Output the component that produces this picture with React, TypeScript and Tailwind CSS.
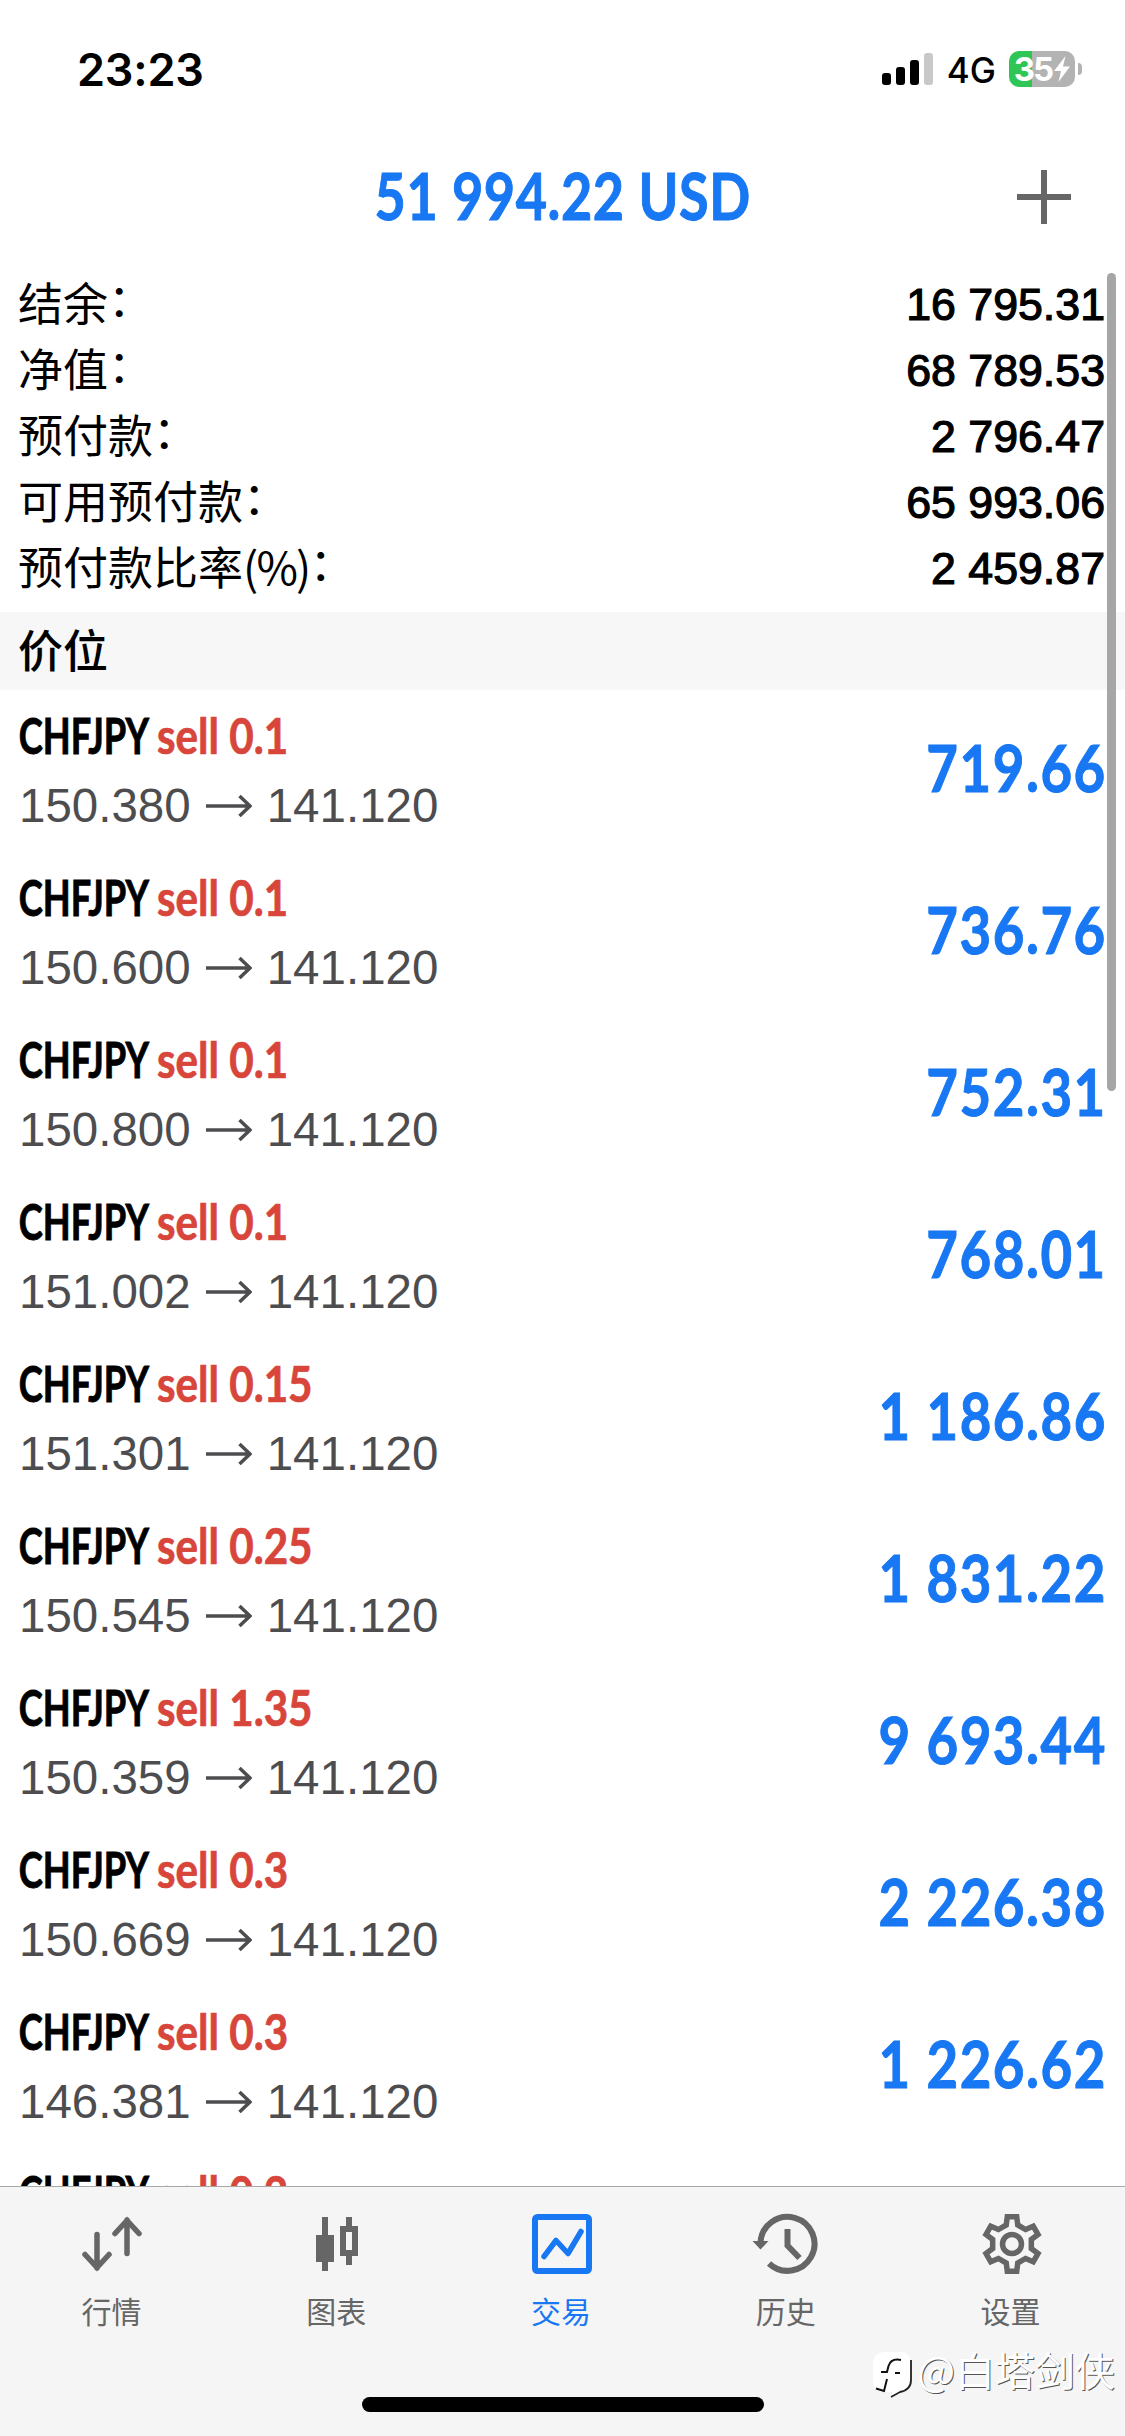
import { clsx } from 'clsx'

const ACCOUNT = [
  { label: '结余', value: '16 795.31' },
  { label: '净值', value: '68 789.53' },
  { label: '预付款', value: '2 796.47' },
  { label: '可用预付款', value: '65 993.06' },
  { label: '预付款比率', unit: '(%)', value: '2 459.87' },
]

const POSITIONS = [
  { volume: '0.1', open: '150.380', profit: '719.66' },
  { volume: '0.1', open: '150.600', profit: '736.76' },
  { volume: '0.1', open: '150.800', profit: '752.31' },
  { volume: '0.1', open: '151.002', profit: '768.01' },
  { volume: '0.15', open: '151.301', profit: '1 186.86' },
  { volume: '0.25', open: '150.545', profit: '1 831.22' },
  { volume: '1.35', open: '150.359', profit: '9 693.44' },
  { volume: '0.3', open: '150.669', profit: '2 226.38' },
  { volume: '0.3', open: '146.381', profit: '1 226.62' },
]

const TABS = [
  { label: '行情', Icon: QuotesIcon },
  { label: '图表', Icon: CandlesIcon },
  { label: '交易', Icon: TradeIcon, active: true },
  { label: '历史', Icon: HistoryIcon },
  { label: '设置', Icon: GearIcon },
]

/* All tab icons share a 64x64 box centred on 0,0 */
const iconProps = {
  viewBox: '-32 -32 64 64',
  className: 'size-16 overflow-visible',
  fill: 'none',
  stroke: 'currentColor',
  strokeWidth: 5.5,
}

function QuotesIcon() {
  return (
    <svg {...iconProps} strokeLinecap="round">
      <path d="M-15 -9.5V24M-27 10.5L-15 23.5L-3 10.5M15 9.5V-24M3 -10.5L15 -23.5L27 -10.5" />
    </svg>
  )
}

function CandlesIcon() {
  return (
    <svg {...iconProps} stroke="none" fill="currentColor">
      <path d="M-15 -27h6v18h6v27h-6v9h-6v-9h-6v-27h6z" />
      <path fillRule="evenodd" d="M9 -27h6v9h6v30h-6v9h-6v-9h-6v-30h6zM9 -12v18h6v-18z" />
    </svg>
  )
}

function TradeIcon() {
  return (
    <svg {...iconProps} strokeLinecap="round" strokeLinejoin="round">
      <rect x="-27" y="-27" width="54" height="54" rx="2.5" strokeWidth="6" />
      <path d="M-18 12.5L-6 -3.5L6 9.5L19 -12.5" />
    </svg>
  )
}

function HistoryIcon() {
  return (
    <svg {...iconProps} strokeWidth="6">
      <path d="M-26.5 -1A27 27 0 1 1 -18 19.5" />
      <path d="M0.5 -15V1.5L12.5 14" />
      <path d="M-34.5 -3h16l-8 8.5z" fill="currentColor" stroke="none" />
    </svg>
  )
}

// outline of one tooth, repeated every 60 degrees
const TOOTH = [[-5.75, -19], [-4.7, -27.3], [4.7, -27.3], [5.75, -19]]
const GEAR = Array.from({ length: 6 }, (_, i) => {
  const a = (i * Math.PI) / 3
  return TOOTH.map(([x, y]) =>
    `${(x * Math.cos(a) - y * Math.sin(a)).toFixed(2)},${(x * Math.sin(a) + y * Math.cos(a)).toFixed(2)}`,
  ).join(' ')
}).join(' ')

function GearIcon() {
  return (
    <svg {...iconProps}>
      <polygon points={GEAR} />
      <circle r="9.5" />
    </svg>
  )
}

function StatusBar() {
  return (
    <div className="flex h-[138px] items-center justify-between pl-[77px] pr-[43px] font-['Inter',sans-serif]">
      <span className="text-[45px] font-semibold leading-none tracking-[-0.2px]">23:23</span>
      <div className="flex items-center">
        <div className="flex h-8 items-end gap-[5px]">
          <span className="h-3 w-[9px] rounded-[3px] bg-black" />
          <span className="h-[18px] w-[9px] rounded-[3px] bg-black" />
          <span className="h-[25px] w-[9px] rounded-[3px] bg-black" />
          <span className="h-8 w-[9px] rounded-[3px] bg-[#c8c8c8]" />
        </div>
        <span className="ml-[14px] mt-[3px] text-[35px] font-medium leading-none">4G</span>
        <div className="ml-[13px] flex h-9 w-[66px] items-center justify-center rounded-[10px] bg-linear-to-r from-[#2fc655] from-35% to-[#b3b3b3] to-35% text-white">
          <span className="text-[33px] font-bold leading-none tracking-[-2px]">35</span>
          <svg viewBox="0 0 16 26" className="ml-0.5 h-[26px] w-4" fill="currentColor">
            <path d="M11.5 0L0 15h7L4.5 26L16 10.5H9z" />
          </svg>
        </div>
        <span className="ml-[3px] h-3 w-1 rounded-r-full bg-[#b3b3b3]" />
      </div>
    </div>
  )
}

function PositionRow({ volume, open, profit }: { volume: string; open: string; profit?: string }) {
  return (
    <li className="flex h-[162px] shrink-0 items-center justify-between pl-[18px] pr-[19px]">
      <div>
        <div className="flex h-[70px] font-['Lato',sans-serif] text-[49px] font-bold leading-[68px]">
          <span className="w-[139px] origin-left scale-x-[0.74] whitespace-nowrap pl-px [-webkit-text-stroke:0.9px_#000]">
            CHFJPY
          </span>
          <span className="origin-left scale-x-[0.86] whitespace-nowrap text-[#d8453a] [-webkit-text-stroke:0.7px_#d8453a]">
            sell {volume}
          </span>
        </div>
        <div className="flex items-center pl-px text-[47.5px] leading-[70px] text-[#4d4d50]">
          {open}
          <svg viewBox="0 0 46 24" className="mx-[15px] h-6 w-[46px]" fill="none" stroke="currentColor" strokeWidth="3.5">
            <path d="M0 12H44M33.5 2L44 12L33.5 22" />
          </svg>
          141.120
        </div>
      </div>
      {profit && (
        <span className="-mr-px mb-2 origin-right scale-x-[0.84] font-['Lato',sans-serif] text-[65px] font-bold leading-none tracking-[1.8px] text-[#1877f2] [-webkit-text-stroke:1px_#1877f2]">
          {profit}
        </span>
      )}
    </li>
  )
}

function Watermark() {
  return (
    <div className="absolute right-[10px] top-[2349px] flex items-start text-white">
      <svg viewBox="0 0 40 50" className="h-[50px] w-10">
        <path d="M13 3h13q12 0 12 12v17q0 9-11 11l-9 5l2-5H11Q0 42 0 31V15Q0 3 13 3z" fill="#fff" />
        <path d="M38 11v20q0 10-11 12l-9 5" fill="none" stroke="#222" strokeWidth="1.8" />
        <path d="M28 11q-10-2-12.5 6l-1.5 6H8M22 24h5M14 30l-3 12l-8-2.5" fill="none" stroke="#111" strokeWidth="2" />
      </svg>
      <span className="ml-1 font-['Noto_Sans_CJK_SC',sans-serif] text-[40px] leading-[40px] [text-shadow:1px_1px_0_#555]">
        @白塔剑侠
      </span>
    </div>
  )
}

export default function App() {
  return (
    <div className="relative flex h-[2436px] w-[1125px] flex-col overflow-hidden bg-white font-['Liberation_Sans','Noto_Sans_CJK_SC',sans-serif] text-black">
      <StatusBar />

      <header className="relative flex h-[118px] items-center justify-center">
        <h1 className="mb-1 scale-x-[0.83] whitespace-nowrap font-['Lato',sans-serif] text-[65px] font-bold leading-none tracking-[0.7px] text-[#1877f2] [-webkit-text-stroke:1px_#1877f2]">
          51 994.22 USD
        </h1>
        <svg viewBox="0 0 56 56" className="absolute right-[53px] top-[31px] size-14" stroke="#666" strokeWidth="6">
          <path d="M1 28h54M28 1v54" />
        </svg>
      </header>

      <dl className="h-[356px] pl-[18px] pr-5 pt-[13px] text-[45px] leading-[66px]">
        {ACCOUNT.map(({ label, unit, value }) => (
          <div key={label} className="flex h-[66px] justify-between">
            <dt className="flex font-['Noto_Sans_CJK_SC',sans-serif]">
              {label}
              {unit && <span className="tracking-[-1.8px]">{unit}</span>}
              <span className="-mt-1">：</span>
            </dt>
            <dd className="pt-[3px] text-[44.7px] [-webkit-text-stroke:1.2px_#000]">{value}</dd>
          </div>
        ))}
      </dl>

      <h2 className="flex h-[78px] shrink-0 items-center bg-[#f7f7f7] pb-1.5 pl-[18px] font-['Noto_Sans_CJK_SC',sans-serif] text-[45px] font-medium leading-none">
        价位
      </h2>

      <ul className="flex min-h-0 flex-1 flex-col overflow-hidden">
        {POSITIONS.map((p, i) => (
          <PositionRow key={i} {...p} />
        ))}
        {/* next row, mostly hidden behind the tab bar */}
        <PositionRow volume="0.2" open="146.381" />
      </ul>

      <nav className="h-[250px] shrink-0 border-t border-[#a8a8a8] bg-[#f5f5f5]">
        <div className="grid grid-cols-5 pr-px pt-[25px]">
          {TABS.map(({ label, Icon, active }) => (
            <div
              key={label}
              className={clsx('flex flex-col items-center gap-[22px]', active ? 'text-[#1877f2]' : 'text-[#666]')}
            >
              <Icon />
              <span className="pr-0.5 text-[30px] leading-[30px]">{label}</span>
            </div>
          ))}
        </div>
        <div className="mx-auto mt-[69px] h-[15px] w-[402px] rounded-full bg-black" />
      </nav>

      {/* scroll indicator */}
      <div className="absolute right-[9px] top-[273px] h-[818px] w-[9px] rounded-full bg-[#a6a6a6]" />
      <Watermark />
    </div>
  )
}
